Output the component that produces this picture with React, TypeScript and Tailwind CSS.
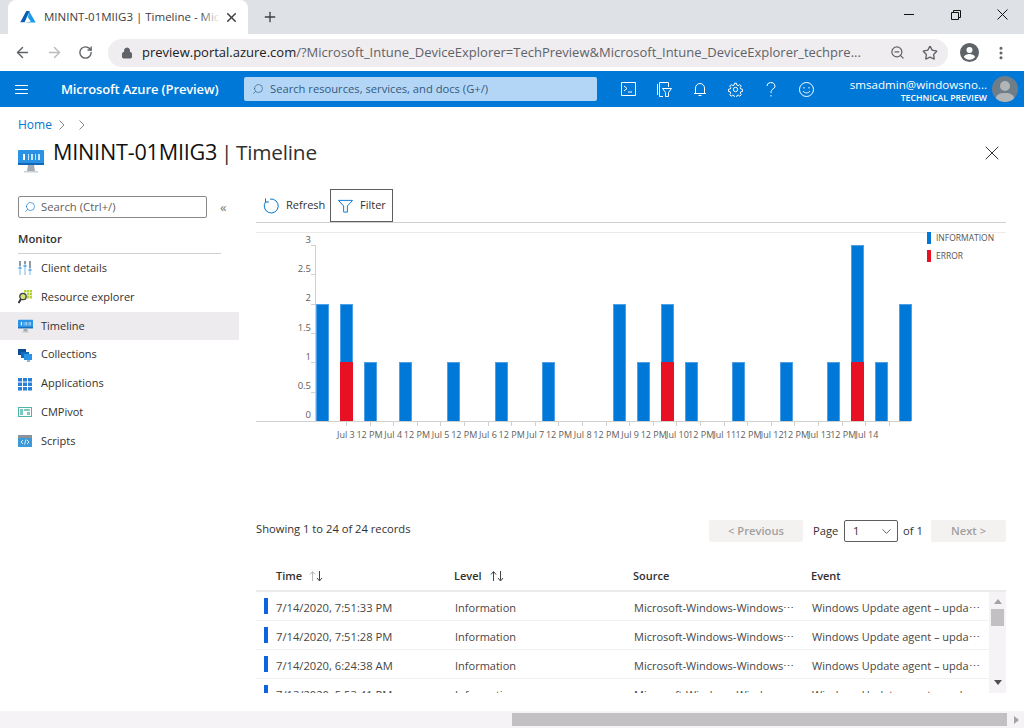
import { ArrowLeft, ArrowRight, ChevronDown, EllipsisVertical, Lock, Plus, RotateCw, Search, Star, X, ZoomOut } from "lucide-react";

const sans = "font-['Open_Sans','Liberation_Sans',sans-serif]";

type Bar = { x: number; info: number; error?: number };

// page x of each bar, blue value, red value
const bars: Bar[] = [
  { x: 316, info: 2 },
  { x: 340, info: 1, error: 1 },
  { x: 364, info: 1 },
  { x: 399, info: 1 },
  { x: 447, info: 1 },
  { x: 495, info: 1 },
  { x: 542, info: 1 },
  { x: 613, info: 2 },
  { x: 637, info: 1 },
  { x: 661, info: 1, error: 1 },
  { x: 685, info: 1 },
  { x: 732, info: 1 },
  { x: 780, info: 1 },
  { x: 827, info: 1 },
  { x: 851, info: 2, error: 1 },
  { x: 875, info: 1 },
  { x: 899, info: 2 },
];

const yTicks = ["3", "2.5", "2", "1.5", "1", "0.5", "0"];
const xLabels = [
  "Jul 3", "12 PM", "Jul 4", "12 PM", "Jul 5", "12 PM", "Jul 6", "12 PM", "Jul 7", "12 PM", "Jul 8", "12 PM",
  "Jul 9", "12 PM", "Jul 10", "12 PM", "Jul 11", "12 PM", "Jul 12", "12 PM", "Jul 13", "12 PM", "Jul 14",
];

const rows = ["7/14/2020, 7:51:33 PM", "7/14/2020, 7:51:28 PM", "7/14/2020, 6:24:38 AM", "7/13/2020, 5:53:41 PM"];

function AzureLogo() {
  return (
    <svg viewBox="0 0 18 14" className="h-[12px] w-[16px]">
      <path d="M7 0h4L5 13H0z" fill="#0a5fb4" />
      <path d="M10.2 0 18 13.500H5.500l7-1.300-3.600-4.600z" fill="#1e9be8" />
    </svg>
  );
}

function Monitor({ big }: { big?: boolean }) {
  return (
    <svg viewBox="0 0 26 24" className={big ? "h-[24px] w-[26px]" : "h-[14px] w-[15px]"}>
      <rect y="1" width="26" height="15" rx="1" fill="#2a93e6" />
      <rect y="14" width="26" height="2" fill="#1268b8" />
      <path d="M5 5h2v6H5z" fill="#fff" />
      <path d="M10 5h1v6h-1zM13 5h2v6h-2zM17 5h1v6h-1zM20 5h2v6h-2z" fill="#c9e8fb" />
      <path d="M10 16h6l1 6H9z" fill="#a4acb3" />
      <rect x="6" y="22" width="14" height="1.500" fill="#cdd1d4" />
    </svg>
  );
}

function NavIcon({ name }: { name: string }) {
  if (name === "Timeline") return <Monitor />;
  if (name === "Client details")
    return (
      <svg viewBox="0 0 14 14" className="h-[14px] w-[14px]">
        <path d="M1 0h2v14H1zM6 0h2v14H6zM11 0h2v14h-2z" fill="#b9dcf2" />
        <path d="M1 0h2v5H1zM6 0h2v3H6zM11 0h2v7h-2z" fill="#8d9aa6" />
        <path d="M.5 6h3v2h-3zM5.500 4h3v2h-3zM10.500 8h3v2h-3z" fill="#6cb2e6" />
      </svg>
    );
  if (name === "Resource explorer")
    return (
      <svg viewBox="0 0 14 14" className="h-[14px] w-[14px]">
        <path d="M6 0h2.500v2.500H6zM9 0h2.500v2.500H9zM12 0h2v2.500h-2zM9 3h2.500v2.500H9zM12 3h2v2.500h-2zM9 6h2.500v2.500H9zM12 6h2v2.500h-2z" fill="#b4d334" />
        <circle cx="5" cy="6.500" r="3.200" fill="#d5e27c" stroke="#3d3d3d" strokeWidth="1.300" />
        <path d="M3 9 .5 13" stroke="#333" strokeWidth="2" />
      </svg>
    );
  if (name === "Collections")
    return (
      <svg viewBox="0 0 14 14" className="h-[14px] w-[14px]">
        <rect x="0" y="1" width="8" height="6" fill="#0a4f96" />
        <rect x="3" y="4" width="8" height="6" fill="#0f6dbf" />
        <rect x="6" y="6" width="8" height="6" fill="#2a93e6" />
        <rect x="9" y="12" width="3" height="2" fill="#8ab8dc" />
      </svg>
    );
  if (name === "Applications")
    return (
      <svg viewBox="0 0 14 14" className="h-[14px] w-[14px]">
        <path d="M0 1h4v3.500H0zM5 1h4v3.500H5zM10 1h4v3.500h-4zM0 5.500h4V9H0zM5 5.500h4V9H5zM10 5.500h4V9h-4zM0 10h4v3.500H0zM5 10h4v3.500H5zM10 10h4v3.500h-4z" fill="#2a7fd6" />
      </svg>
    );
  if (name === "CMPivot")
    return (
      <svg viewBox="0 0 14 14" className="h-[14px] w-[14px]">
        <rect x=".5" y="2.500" width="13" height="9" fill="#fff" stroke="#4fb3a6" />
        <path d="M2 4h3v6H2zM6 4h6v2H6zM9 7h3v3H9z" fill="#7ccabf" />
      </svg>
    );
  return (
    <svg viewBox="0 0 14 14" className="h-[14px] w-[14px]">
      <rect y="1" width="14" height="12" fill="#3d9ad8" />
      <rect y="1" width="14" height="3" fill="#8c9298" />
      <path d="M5 6 3 8l2 2M9 6l2 2-2 2M8 5.500 6.500 10.500" fill="none" stroke="#fff" strokeWidth=".8" />
    </svg>
  );
}

function SortIcon({ dim }: { dim?: boolean }) {
  return (
    <svg viewBox="0 0 16 12" className="h-[12px] w-[16px]" fill="none" strokeWidth="1">
      <path d="M4.500 11V2M2 4.500l2.500-3 2.500 3" stroke={dim ? "#b8b8b8" : "#444"} />
      <path d="M11.500 1v9.500M9 8l2.500 3L14 8" stroke="#444" />
    </svg>
  );
}

function Crumb() {
  return (
    <svg viewBox="0 0 6 10" className="h-[10px] w-[6px]" fill="none" stroke="#8a8886">
      <path d="M.5.5 5 5 .5 9.500" />
    </svg>
  );
}

function BrowserChrome() {
  return (
    <div className="shrink-0">
      <div className="flex h-[34px] items-end bg-[#dee1e6]">
        <div className="relative ml-2 flex h-[34px] w-[240px] items-center rounded-t-lg bg-white pl-3 pr-2">
          <AzureLogo />
          <span className="ml-[8px] w-[175px] overflow-hidden whitespace-nowrap text-[11.5px] text-[#3c4043]">
            MININT-01MIIG3 | Timeline - Mic
          </span>
          <div className="absolute left-[192px] top-[8px] h-[20px] w-[20px] bg-linear-to-r from-transparent to-white" />
          <X className="ml-[5px] size-[15px] text-[#3c4043]" strokeWidth={2.4} />
        </div>
        <Plus className="mb-[9px] ml-[14px] size-[16px] text-[#3c4043]" strokeWidth={2} />
        <div className="ml-auto mb-[14px] flex items-center pr-[16px] text-[#111]">
          <div className="h-px w-[10px] bg-[#111]" />
          <svg viewBox="0 0 10 10" className="ml-[37px] size-[10px]" fill="none" stroke="#111">
            <path d="M.5 2.500h7v7h-7zM2.500 2.500v-2h7v7h-2" />
          </svg>
          <svg viewBox="0 0 11 11" className="ml-[36px] size-[11px]" fill="none" stroke="#111">
            <path d="M.5.500l10 10M10.500.500l-10 10" />
          </svg>
        </div>
      </div>
      <div className="flex h-[37px] items-center bg-white">
        <ArrowLeft className="ml-[14px] size-[17px] text-[#5f6368]" strokeWidth={2} />
        <ArrowRight className="ml-[15px] size-[17px] text-[#babcbe]" strokeWidth={2} />
        <RotateCw className="ml-[15px] size-[15px] text-[#5f6368]" strokeWidth={2.2} />
        <div className="ml-[15px] flex h-[28px] w-[840px] items-center rounded-full bg-[#f0edf0] pl-[13px] pr-[10px] text-[13px]">
          <Lock className="size-[12px] text-[#5f6368]" fill="#5f6368" strokeWidth={2} />
          <span className="ml-[9px] w-[728px] overflow-hidden whitespace-nowrap text-[#5f6368]">
            <span className="text-[#202124]">preview.portal.azure.com</span>
            /?Microsoft_Intune_DeviceExplorer=TechPreview&amp;Microsoft_Intune_DeviceExplorer_techpre...
          </span>
          <ZoomOut className="ml-auto size-[15px] text-[#5f6368]" />
          <Star className="ml-[17px] size-[16px] text-[#5f6368]" strokeWidth={2} />
        </div>
        <svg viewBox="0 0 19 19" className="ml-[12px] size-[19px]">
          <circle cx="9.500" cy="9.500" r="9.500" fill="#5f6368" />
          <circle cx="9.500" cy="7" r="3" fill="#fff" />
          <path d="M3.800 14c1-2.200 3.500-3 5.700-3s4.700.8 5.700 3c-1.300 1.600-3.400 2.700-5.700 2.700S5.100 15.600 3.800 14z" fill="#fff" />
        </svg>
        <EllipsisVertical className="ml-[14px] size-[16px] text-[#5f6368]" strokeWidth={2.6} />
      </div>
    </div>
  );
}

function AzureBar() {
  return (
    <div className="flex h-[36px] shrink-0 items-center bg-[#0078d7] text-white">
      <div className="ml-[15px] flex w-[13px] flex-col gap-[3px]">
        <div className="h-px bg-white" />
        <div className="h-px bg-white" />
        <div className="h-px bg-white" />
      </div>
      <span className="ml-[33px] mt-[1px] w-[183px] whitespace-nowrap text-[13px] font-semibold tracking-[-0.13px]">Microsoft Azure (Preview)</span>
      <div className="flex h-[24px] w-[353px] items-center rounded-[2px] bg-[#b3d6f6] pl-[8px] text-[11.2px] text-[#345a7e]">
        <Search className="size-[12px] -scale-x-100" strokeWidth={1.3} />
        <span className="ml-[6px]">Search resources, services, and docs (G+/)</span>
      </div>
      <div className="ml-[24px] flex items-center">
        <svg viewBox="0 0 15 14" className="h-[14px] w-[15px]" fill="none" stroke="#fff">
          <path d="M.5.500h14v13H.5zM3 4l3 2.500L3 9M7 10h4" />
        </svg>
        <svg viewBox="0 0 15 15" className="ml-[21px] size-[15px]" fill="none" stroke="#fff">
          <path d="M2.500.500h9v4.500M6 14.500H2.500V.500M.5 2v11M5.500 6.500h9l-3 4v4h-3v-4z" />
        </svg>
        <svg viewBox="0 0 14 15" className="ml-[21px] h-[15px] w-[14px]" fill="none" stroke="#fff">
          <path d="M2.500 11.500V6a4.500 4.500 0 0 1 9 0v5.500zM1 11.500h12M5.500 13.500h3" />
        </svg>
        <svg viewBox="0 0 24 24" className="ml-[21px] size-[15px]" fill="none" stroke="#fff" strokeWidth="1.6">
          <circle cx="12" cy="12" r="3.500" />
          <path d="M10.300 2h3.400l.5 3 2.200.9 2.500-1.800 2.400 2.400-1.800 2.500.9 2.200 3 .5v3.400l-3 .5-.9 2.200 1.800 2.500-2.400 2.400-2.500-1.800-2.200.9-.5 3h-3.400l-.5-3-2.200-.9-2.500 1.800-2.400-2.400 1.800-2.500-.9-2.200-3-.5v-3.400l3-.5.9-2.200-1.800-2.500 2.400-2.400 2.500 1.800 2.200-.9z" />
        </svg>
        <svg viewBox="0 0 10 15" className="ml-[23px] h-[15px] w-[10px]" fill="none" stroke="#fff">
          <path d="M1 4a4 3.500 0 1 1 6 3c-1.500 1-2 1.800-2 4" />
          <path d="M5 13v1.500" />
        </svg>
        <svg viewBox="0 0 15 15" className="ml-[23px] size-[15px]" fill="none" stroke="#fff">
          <circle cx="7.500" cy="7.500" r="7" />
          <path d="M4 9c1.500 2.500 5.500 2.500 7 0M5 5v1.500M10 5v1.500" />
        </svg>
      </div>
      <div className="ml-[32px] mt-[4px] flex w-[141px] flex-col items-end leading-none">
        <span className="whitespace-nowrap text-[11.6px]">smsadmin@windowsno...</span>
        <span className="mt-[3px] whitespace-nowrap text-[8.7px] font-semibold">TECHNICAL PREVIEW</span>
      </div>
      <div className="relative ml-[5px] size-[26px] overflow-hidden rounded-full bg-[#6f7d89]">
        <div className="absolute left-[8px] top-[5px] size-[10px] rounded-full bg-[#b0b5b8]" />
        <div className="absolute left-[3px] top-[17px] h-[12px] w-[20px] rounded-t-lg bg-[#b0b5b8]" />
      </div>
    </div>
  );
}

function Sidebar() {
  const items = ["Client details", "Resource explorer", "Timeline", "Collections", "Applications", "CMPivot", "Scripts"];
  return (
    <div className="mt-[7px] w-[239px] shrink-0">
      <div className="ml-[18px] flex items-center">
        <div className="flex h-[22px] w-[189px] items-center rounded-[2px] border border-[#8a8886] pl-[5px] text-[11.3px] text-[#605e5c]">
          <Search className="size-[12px] -scale-x-100 text-[#0078d4]" strokeWidth={1.3} />
          <span className="ml-[5px]">Search (Ctrl+/)</span>
        </div>
        <span className="ml-[13px] text-[13px] leading-none text-[#777]">«</span>
      </div>
      <div className="ml-[18px] mt-[13px] w-[203px] border-b border-[#d2d0ce] pb-[5px] text-[11.3px] font-semibold text-[#323130]">Monitor</div>
      <div>
        {items.map((item) => (
          <div
            key={item}
            className={"flex h-[28.8px] items-center pl-[18px] text-[11px] text-[#323130] " + (item === "Timeline" ? "bg-[#eeebee]" : "")}
          >
            <span className="flex w-[23px]">
              <NavIcon name={item} />
            </span>
            {item}
          </div>
        ))}
      </div>
    </div>
  );
}

function Chart() {
  const unit = 58.67;
  return (
    <div className="relative mt-[9px] h-[219px] border-t border-[#edebe9]">
      {/* the plot is its own pixel canvas: offsets are page x minus 256 and page y minus 233 */}
      {yTicks.map((t, i) => (
        <div key={t}>
          <span className="absolute right-[695px] text-[9.5px] leading-none text-[#605e5c]" style={{ top: 2 + i * 29.2 }}>
            {t}
          </span>
          <div className="absolute left-[55px] h-px w-[4px] bg-[#d2d0ce]" style={{ top: 12 + i * 29.33 }} />
        </div>
      ))}
      <div className="absolute left-[59px] top-[12px] h-[176px] w-px bg-[#d2d0ce]" />
      <div className="absolute left-0 top-[188px] h-px w-[655px] bg-[#d2d0ce]" />
      {Array.from({ length: 24 }, (_, i) => (
        <div key={i} className="absolute top-[188px] h-[5px] w-px bg-[#d2d0ce]" style={{ left: 90 + i * 23.6 }} />
      ))}
      {bars.map((b) => (
        <div key={b.x} className="absolute flex w-[13px] flex-col" style={{ left: b.x - 256, top: 188 - (b.info + (b.error ?? 0)) * unit }}>
          <div className="border-x border-t border-[#4fa0e6] bg-[#0078d7]" style={{ height: b.info * unit }} />
          {b.error ? <div className="bg-[#e81123]" style={{ height: b.error * unit }} /> : null}
        </div>
      ))}
      <div className="absolute left-[78px] top-[197px] flex text-[9px] leading-none text-[#605e5c]">
        {xLabels.map((l, i) => (
          <span key={i} className="flex w-[23.7px] shrink-0 justify-center whitespace-nowrap">
            {l}
          </span>
        ))}
      </div>
      <div className="absolute left-[671px] top-[-4px] text-[8.5px] leading-none text-[#555]">
        <div className="flex h-[18px] items-center">
          <span className="mr-[5px] h-[12px] w-[4px] bg-[#0078d7]" />
          INFORMATION
        </div>
        <div className="flex h-[18px] items-center">
          <span className="mr-[5px] h-[12px] w-[4px] bg-[#e81123]" />
          ERROR
        </div>
      </div>
    </div>
  );
}

function Pagination() {
  return (
    <div className="mt-[69px] flex h-[22px] items-center text-[11.2px] text-[#323130]">
      <span className="mb-[4px]">Showing 1 to 24 of 24 records</span>
      <div className="ml-auto flex items-center">
        <div className="flex h-[22px] w-[94px] items-center justify-center rounded-[2px] bg-[#f3f2f1] font-semibold text-[#a19f9d]">&lt; Previous</div>
        <span className="ml-[10px] w-[25px]">Page</span>
        <div className="ml-[6px] flex h-[22px] w-[54px] items-center justify-between rounded-[2px] border border-[#605e5c] pl-[8px] pr-[3px]">
          1
          <ChevronDown className="size-[15px]" strokeWidth={1.2} />
        </div>
        <span className="ml-[5px] mr-[9px] w-[19px] whitespace-nowrap">of 1</span>
        <div className="flex h-[22px] w-[75px] items-center justify-center rounded-[2px] bg-[#f3f2f1] font-semibold text-[#a19f9d]">Next &gt;</div>
      </div>
    </div>
  );
}

function EventTable() {
  return (
    <div className="mt-[23px] text-[11px] text-[#323130]">
      <div className="grid h-[27px] grid-cols-[178px_179px_178px_1fr] items-start border-b-2 border-[#edebe9] pl-[20px] pt-[3px] font-semibold">
        <span className="flex items-center">
          Time
          <span className="ml-[6px]">
            <SortIcon dim />
          </span>
        </span>
        <span className="flex items-center">
          Level
          <span className="ml-[7px]">
            <SortIcon />
          </span>
        </span>
        <span>Source</span>
        <span>Event</span>
      </div>
      <div className="flex h-[101px] overflow-hidden">
        <div className="w-[733px]">
          {rows.map((time) => (
            <div key={time} className="flex h-[29px] shrink-0 items-center whitespace-nowrap border-b border-[#f3f2f1] text-[#484644]">
              <span className="ml-[8px] h-[16px] w-[4px] bg-[#0f62e0]" />
              <span className="ml-[8px] mt-[4px] w-[179px] text-[11.2px]">{time}</span>
              <span className="mt-[4px] w-[179px]">Information</span>
              <span className="mt-[4px] w-[178px]">Microsoft-Windows-Windows⋯</span>
              <span className="mt-[4px] w-[168px]">Windows Update agent – upda⋯</span>
            </div>
          ))}
        </div>
        <div className="flex w-[17px] flex-col items-center bg-[#f5f3f5] pt-[7px]">
          <div className="size-0 border-x-[4px] border-b-[5px] border-x-transparent border-b-[#a3a3a3]" />
          <div className="mt-[5px] h-[17px] w-[13px] shrink-0 bg-[#c2c0c2]" />
          <div className="mt-auto mb-[8px] size-0 border-x-[4px] border-t-[5px] border-x-transparent border-t-[#505050]" />
        </div>
      </div>
    </div>
  );
}

export default function App() {
  return (
    <div className={"flex h-[728px] w-[1024px] flex-col overflow-hidden bg-white " + sans}>
      <BrowserChrome />
      <AzureBar />
      <div className="flex-1 overflow-hidden">
        <div className="ml-[18px] mt-[9px] flex items-center text-[12px] text-[#0078d4]">
          Home
          <span className="ml-[7px]">
            <Crumb />
          </span>
          <span className="ml-[14px]">
            <Crumb />
          </span>
        </div>
        <div className="ml-[18px] mt-[2px] flex h-[32px] items-center text-[#323130]">
          <span className="mt-[18px]">
            <Monitor big />
          </span>
          <span className="ml-[9px] whitespace-nowrap tracking-[-0.2px]">
            <span className="text-[21.6px] text-[#111]">MININT-01MIIG3</span>
            <span className="text-[20.8px] [word-spacing:-1.5px]"> | Timeline</span>
          </span>
          <X className="ml-auto mr-[20px] mt-[2px] size-[24px]" strokeWidth={1} />
        </div>
        <div className="mt-[21px] flex">
          <Sidebar />
          <div className="mr-[18px] flex-1 pl-[17px]">
            <div className="flex h-[34px] items-stretch border-b border-[#d2d0ce] text-[11px] text-[#323130]">
              <div className="flex w-[74px] items-center pl-[7px]">
                <svg viewBox="0 0 16 16" className="size-[16px]" fill="none" stroke="#0078d4">
                  <path d="M7 1.100A7 7 0 1 1 2.700 3.700" />
                  <path d="M2.500.500v3.500H6" />
                </svg>
                <span className="ml-[7px]">Refresh</span>
              </div>
              <div className="flex w-[63px] items-center border border-[#605e5c] pl-[7px]">
                <svg viewBox="0 0 16 14" className="h-[14px] w-[15px]" fill="none" stroke="#0078d4">
                  <path d="M.5 1h15L10 7v6.500H6V7z" />
                </svg>
                <span className="ml-[7px]">Filter</span>
              </div>
            </div>
            <Chart />
            <Pagination />
            <EventTable />
          </div>
        </div>
      </div>
      <div className="flex h-[17px] shrink-0 items-center bg-[#f5f3f5]">
        <div className="ml-[512px] h-[13px] w-[495px] bg-[#c2c0c2]" />
        <div className="ml-[7px] size-0 border-y-[4px] border-l-[5px] border-y-transparent border-l-[#a3a3a3]" />
      </div>
    </div>
  );
}
